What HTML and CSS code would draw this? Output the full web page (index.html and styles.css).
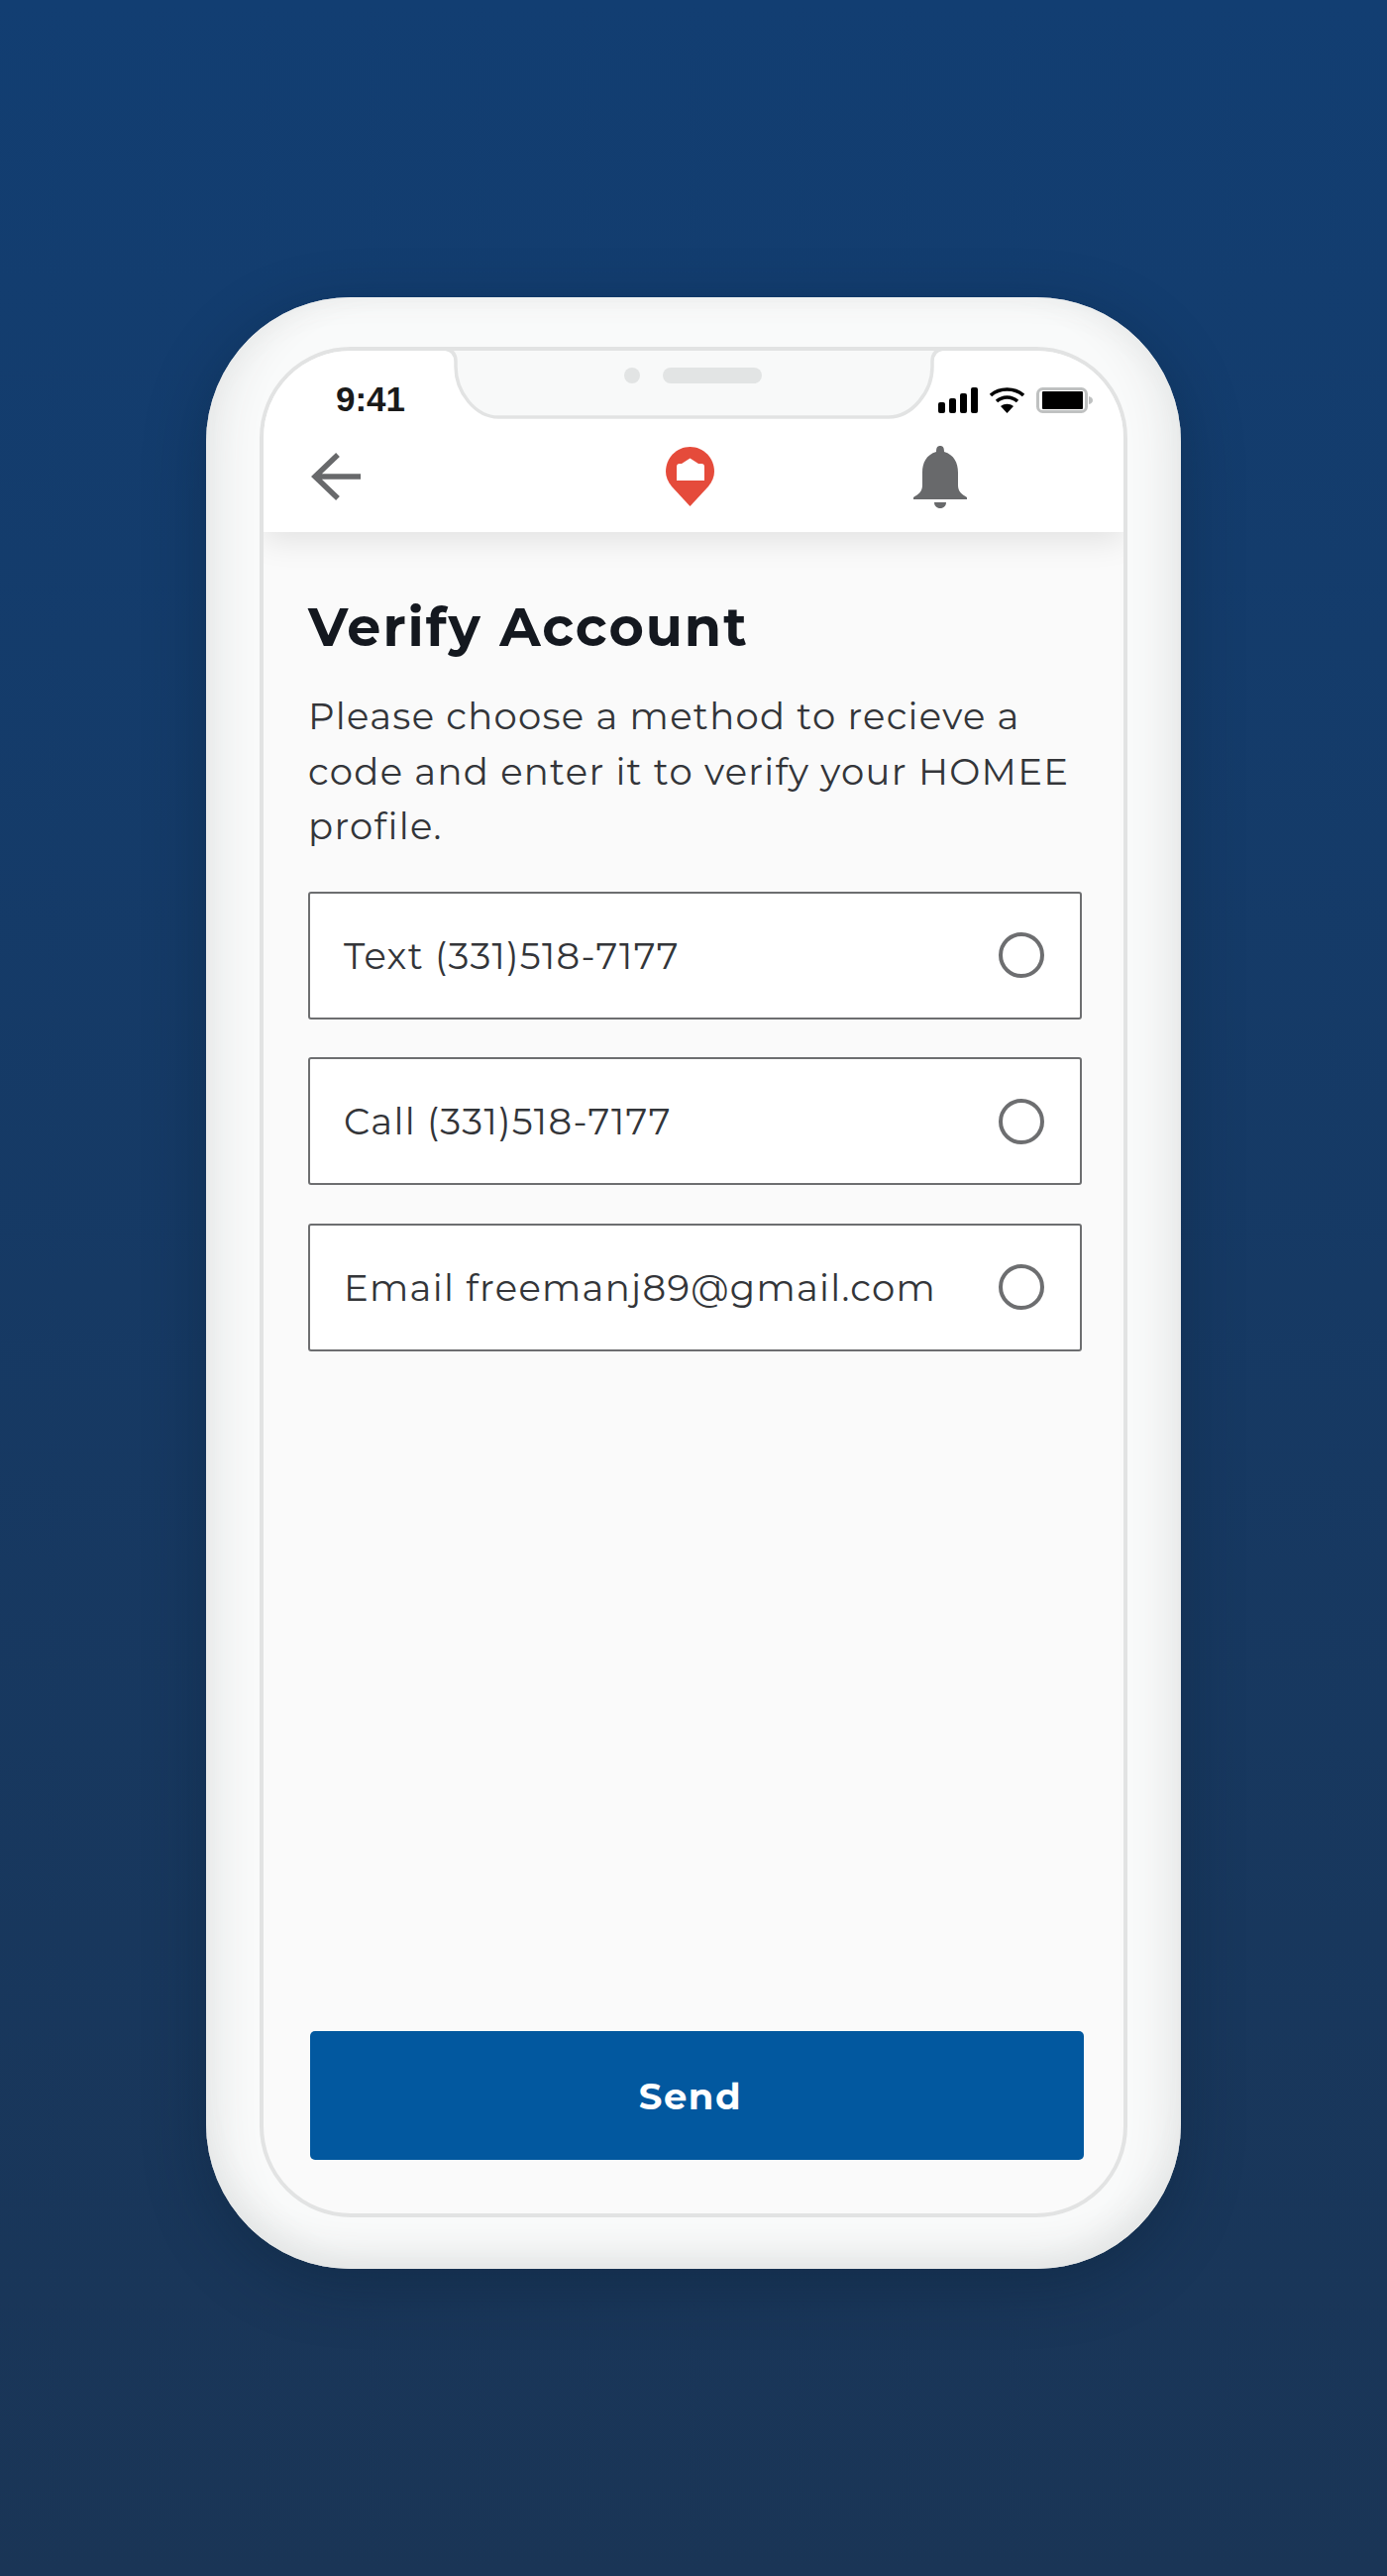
FILE: index.html
```html
<!DOCTYPE html>
<html lang="en">
<head>
    <meta charset="UTF-8">
    <meta name="viewport" content="width=device-width, initial-scale=1.0">
    <title>Verify Account</title>
    <link rel="stylesheet" href="styles.css">
</head>
<body>
    <div class="phone">
        <div class="screen">
            <!-- notch sits over the top edge of the screen -->
            <svg class="notch" width="520" height="76" viewBox="0 0 520 76">
                <path d="M2 0 V2 H6 Q20 2 20 15 V20 C20 46 40 71 63 71 H457 C480 71 501 46 501 20 V15 Q501 2 515 2 H519 V0 Z" fill="#f8f9f9"/>
                <path d="M2 2 H6 Q20 2 20 15 V20 C20 46 40 71 63 71 H457 C480 71 501 46 501 20 V15 Q501 2 515 2 H519" fill="none" stroke="#e2e3e3" stroke-width="3.500"/>
                <circle cx="198" cy="29" r="8" fill="#e2e4e4"/>
                <rect x="229" y="21" width="100" height="16" rx="8" fill="#e2e4e4"/>
            </svg>
            <div class="top">
                <div class="status">
                    <span class="time">9:41</span>
                    <div class="status-icons">
                        <svg width="40" height="26" viewBox="0 0 40 26">
                            <rect x="0" y="15" width="7" height="11" rx="2" fill="#000"/>
                            <rect x="11" y="11" width="7" height="15" rx="2" fill="#000"/>
                            <rect x="22" y="6" width="7" height="20" rx="2" fill="#000"/>
                            <rect x="33" y="0" width="7" height="26" rx="2" fill="#000"/>
                        </svg>
                        <svg width="35" height="26" viewBox="0 0 35 26">
                            <path d="M1 8 C10 0 25 0 34 8 M7 14 C13 8.500 22 8.500 28 14" fill="none" stroke="#000" stroke-width="3.500"/>
                            <path d="M11 19 C15 16 20 16 24 19 L17.500 26 Z" fill="#000"/>
                        </svg>
                        <svg width="57" height="26" viewBox="0 0 57 26">
                            <rect x="1.500" y="1.500" width="49" height="23" rx="5" fill="none" stroke="#bfc1c1" stroke-width="3"/>
                            <rect x="6" y="4" width="41" height="18" rx="1" fill="#000"/>
                            <path d="M53 9 Q57 10 57 13 Q57 16 53 17 Z" fill="#bfc1c1"/>
                        </svg>
                    </div>
                </div>
                <div class="nav">
                    <svg class="back" width="50" height="48" viewBox="0 0 50 48">
                        <path d="M50 24 H5 M27 2 L4 24 L27 46" fill="none" stroke="#68696b" stroke-width="5.500"/>
                    </svg>
                    <svg class="logo" width="49" height="60" viewBox="0 0 49 60">
                        <path d="M24.500 60 L6 40 C2 35 0 30 0 25 C0 11 11 0 24.500 0 C38 0 49 11 49 25 C49 30 47 35 43 40 Z" fill="#e54b3b"/>
                        <path d="M11 20 Q11 17 14 17 H16 L24.500 11.500 L33 17 H36 Q39 17 39 20 V34 H11 Z" fill="#fff"/>
                    </svg>
                    <svg class="bell" width="54" height="63" viewBox="0 0 54 63">
                        <path d="M27 0 C30 0 31 2 31 6 C41 9 45 17 45 27 V40 C45 46 49 49 54 52 V54 H0 V52 C5 49 9 46 9 40 V27 C9 17 13 9 23 6 C23 2 24 0 27 0 Z" fill="#68696b"/>
                        <path d="M21 57 H33 C33 61 30 63 27 63 C24 63 21 61 21 57 Z" fill="#68696b"/>
                    </svg>
                </div>
            </div>
            <div class="content">
                <h1>Verify Account</h1>
                <p class="intro">Please choose a method to recieve a code and enter it to verify your HOMEE profile.</p>
                <div class="options">
                    <div class="option"><span>Text (331)518-7177</span><span class="radio"></span></div>
                    <div class="option"><span>Call (331)518-7177</span><span class="radio"></span></div>
                    <div class="option"><span>Email freemanj89@gmail.com</span><span class="radio"></span></div>
                </div>
                <button class="send" type="button">Send</button>
            </div>
        </div>
    </div>
</body>
</html>
```

FILE: styles.css
```css
body {
    margin: 0;
    height: 2600px;
    padding-top: 300px;
    box-sizing: border-box;
    background: linear-gradient(#123e72, #1a3556);
    font-family: Montserrat, "Open Sans", "Noto Sans", sans-serif;
}
.phone {
    width: 984px;
    height: 1990px;
    margin-left: 208px;
    padding: 50px 54px 52px;
    box-sizing: border-box;
    border-radius: 146px;
    background: #f9fafa;
    box-shadow: inset 0 -36px 36px -22px #e2e4e4, inset 36px 0 44px -26px #e3e5e5, inset -36px 0 44px -26px #e3e5e5, inset 0 24px 30px -20px #eff0f0, 0 16px 60px rgba(10, 30, 50, 0.35);
}
.screen {
    position: relative;
    height: 100%;
    box-sizing: border-box;
    border: 4px solid #e2e3e3;
    border-radius: 92px;
    overflow: hidden;
    background: #fafafa;
    display: flex;
    flex-direction: column;
}
.notch {
    position: absolute;
    z-index: 2;
    top: -4px;
    left: 174px;
}
.top {
    height: 183px;
    background: #fff;
    box-shadow: 0 8px 30px rgba(0, 0, 0, 0.1);
    flex-shrink: 0;
    position: relative;
}
.status {
    height: 63px;
    box-sizing: border-box;
    padding: 0 31px 0 73px;
    display: flex;
    justify-content: space-between;
    align-items: flex-end;
}
.time {
    font-family: "Liberation Sans", Arial, sans-serif;
    font-weight: 700;
    font-size: 35px;
    line-height: 28px;
    color: #1a1a1a;
}
.status-icons {
    display: flex;
    align-items: flex-end;
    gap: 12px;
}
.nav {
    height: 120px;
    box-sizing: border-box;
    padding: 8px 0 0 48px;
    display: flex;
    align-items: center;
}
.logo { margin-left: 308px; }
.bell { margin-left: 201px; }
.content {
    flex: 1;
    padding: 66px 42px 54px 45px;
    display: flex;
    flex-direction: column;
}
h1 {
    margin: 0;
    font-size: 54px;
    line-height: 60px;
    letter-spacing: 2px;
    font-weight: 700;
    color: #14181f;
}
.intro {
    margin: 32px 0 0;
    font-size: 37px;
    line-height: 55.500px;
    letter-spacing: 1.300px;
    font-weight: 400;
    color: #333539;
}
.options {
    margin-top: 38px;
    display: flex;
    flex-direction: column;
    gap: 38.500px;
}
.option {
    height: 129px;
    box-sizing: border-box;
    border: 2px solid #6d6e70;
    border-radius: 3px;
    background: #fff;
    padding: 0 36px 0 34px;
    display: flex;
    align-items: center;
    justify-content: space-between;
    font-size: 37px;
    letter-spacing: 1.300px;
    color: #333539;
}
.radio {
    width: 46px;
    height: 46px;
    box-sizing: border-box;
    border: 4.500px solid #6d6e70;
    border-radius: 50%;
}
.send {
    margin-top: auto;
    margin-left: 2px;
    width: 781px;
    height: 130px;
    padding: 0 13px 0 0;
    border: none;
    border-radius: 5px;
    background: #02589f;
    color: #fff;
    font-family: inherit;
    font-weight: 700;
    font-size: 37px;
    letter-spacing: 1.500px;
}
```
